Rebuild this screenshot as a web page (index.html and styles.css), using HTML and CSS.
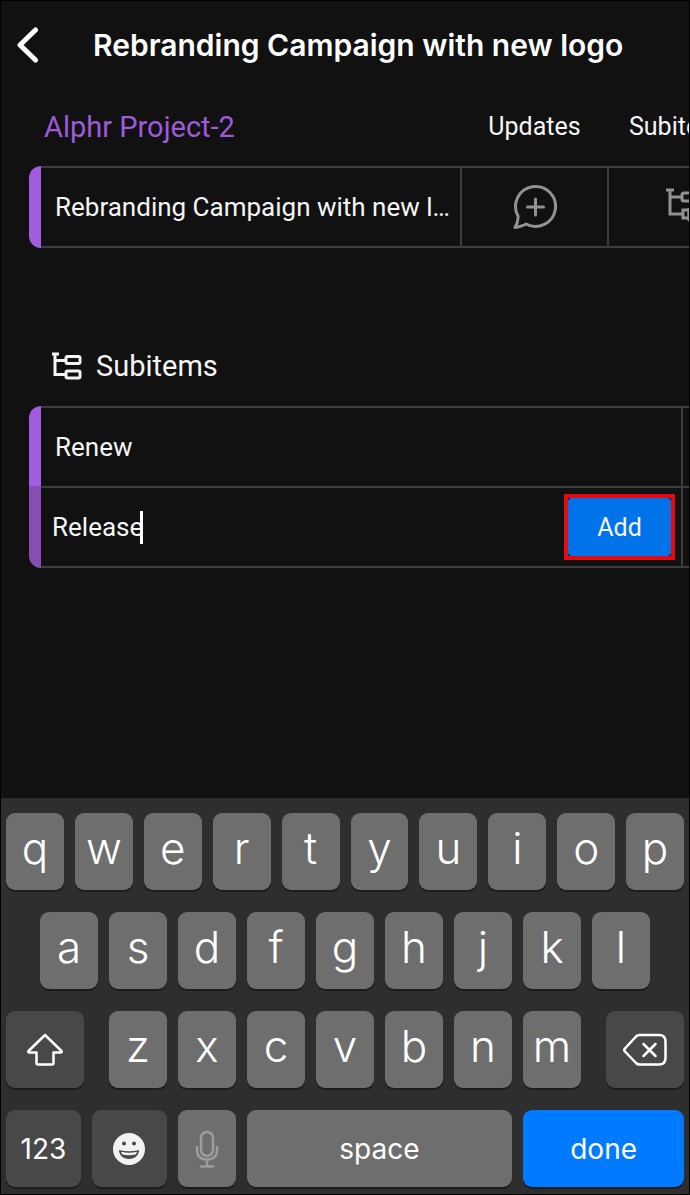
FILE: index.html
```
<!DOCTYPE html>
<html lang="en">
<head>
    <meta charset="UTF-8">
    <meta name="viewport" content="width=device-width, initial-scale=1.0">
    <title>Rebranding Campaign with new logo</title>
    <link rel="stylesheet" href="styles.css">
</head>
<body>
    <header class="top-bar">
        <button type="button" class="back" aria-label="Back">
            <svg width="22" height="36" viewBox="0 0 22 36"><path d="M18.500 3L3 18l15.500 15" fill="none" stroke="#fff" stroke-width="5" stroke-linecap="round" stroke-linejoin="round"/></svg>
        </button>
        <h1>Rebranding Campaign with new logo</h1>
    </header>

    <main>
        <table class="board item">
            <colgroup>
                <col class="stripe-col">
                <col>
                <col class="action-col">
                <col class="action-col">
            </colgroup>
            <thead>
                <tr>
                    <th colspan="2" class="project">Alphr Project-2</th>
                    <th>Updates</th>
                    <th>Subitems</th>
                </tr>
            </thead>
            <tbody>
                <tr>
                    <td class="stripe"></td>
                    <td class="name">Rebranding Campaign with new logo</td>
                    <td class="action">
                        <button type="button" aria-label="Add update">
                            <svg width="46" height="46" viewBox="0 0 46 46" fill="none" stroke="currentColor" stroke-width="3" stroke-linecap="round" stroke-linejoin="round"><path d="M6 32A20 20 0 1 1 14 40Q11 42 3 43.500Q6.500 37.500 6 32Z"/><path d="M23.500 15v16M15.500 23h16"/></svg>
                        </button>
                    </td>
                    <td class="action">
                        <button type="button" aria-label="Open subitems">
                            <svg width="34" height="38" viewBox="0 0 34 38" fill="none" stroke="currentColor" stroke-width="3"><path d="M0 2h8M4 2v24h12M4 9h12"/><rect x="16" y="5" width="15" height="8" rx="2"/><path d="M17 22h6v8h-6z"/><path d="M23 20v12l7 5"/></svg>
                        </button>
                    </td>
                </tr>
            </tbody>
        </table>

        <h2>
            <svg width="30" height="28" viewBox="0 0 30 28" fill="none" stroke="currentColor" stroke-width="3"><path d="M0 2h7M3 2v20.500h10M3 8.500h10"/><rect x="14" y="4.500" width="14" height="7" rx="1.500"/><rect x="14" y="19" width="14" height="7" rx="1.500"/></svg>
            Subitems
        </h2>

        <table class="board subitems">
            <colgroup>
                <col class="stripe-col">
                <col class="name-col">
                <col>
            </colgroup>
            <tbody>
                <tr>
                    <td class="stripe"></td>
                    <td class="name">Renew</td>
                    <td></td>
                </tr>
                <tr>
                    <td class="stripe dim"></td>
                    <td class="edit">
                        <form class="new-item">
                            <input type="text" value="Release" aria-label="Subitem name">
                            <span class="caret"></span>
                            <span class="highlight"><button type="button">Add</button></span>
                        </form>
                    </td>
                    <td></td>
                </tr>
            </tbody>
        </table>
    </main>

    <section class="keyboard" aria-label="Keyboard">
        <div class="keys">
            <button type="button">q</button>
            <button type="button">w</button>
            <button type="button">e</button>
            <button type="button">r</button>
            <button type="button">t</button>
            <button type="button">y</button>
            <button type="button">u</button>
            <button type="button">i</button>
            <button type="button">o</button>
            <button type="button">p</button>
        </div>
        <div class="keys middle">
            <button type="button">a</button>
            <button type="button">s</button>
            <button type="button">d</button>
            <button type="button">f</button>
            <button type="button">g</button>
            <button type="button">h</button>
            <button type="button">j</button>
            <button type="button">k</button>
            <button type="button">l</button>
        </div>
        <div class="keys">
            <button type="button" class="dark shift" aria-label="Shift">
                <svg width="38" height="34" viewBox="0 0 38 34"><path d="M19 2L2.500 18q-1 1.500 1 1.500h7V30q0 1.500 1.500 1.500h14q1.500 0 1.500-1.500V19.500h7q2 0 1-1.500Z" fill="none" stroke="#fff" stroke-width="2.500" stroke-linejoin="round"/></svg>
            </button>
            <button type="button">z</button>
            <button type="button">x</button>
            <button type="button">c</button>
            <button type="button">v</button>
            <button type="button">b</button>
            <button type="button">n</button>
            <button type="button">m</button>
            <button type="button" class="dark delete" aria-label="Delete">
                <svg width="44" height="34" viewBox="0 0 44 34" fill="none" stroke="#fff" stroke-width="2.500" stroke-linecap="round" stroke-linejoin="round"><path d="M16.500 2H36q6.500 0 6.500 6.500v16.500q0 6.500-6.500 6.500H16.500q-2 0-3.500-1.500L2 18.500q-1.500-1.500 0-3L13 3.500Q14.500 2 16.500 2Z"/><path d="M20.500 11l12 12M32.500 11l-12 12"/></svg>
            </button>
        </div>
        <div class="keys">
            <button type="button" class="dark word side">123</button>
            <button type="button" class="dark word side" aria-label="Emoji">
                <svg width="32" height="32" viewBox="0 0 32 32"><circle cx="16" cy="16" r="16" fill="#f2f2f2"/><circle cx="11" cy="10.500" r="2" fill="#484848"/><circle cx="21" cy="10.500" r="2" fill="#484848"/><path d="M6 17q10 2.500 20 0c0 5-4 9-10 9s-10-4-10-9Z" fill="#484848"/><path d="M8 18.800q8 1.700 16 0-.300 1.700-1.500 2.700-6.500 1.400-13 0-1.200-1-1.500-2.700Z" fill="#f2f2f2"/></svg>
            </button>
            <button type="button" class="word mic" aria-label="Dictate">
                <svg width="24" height="38" viewBox="0 0 24 38" fill="none" stroke="#9c9c9c" stroke-width="2.500" stroke-linecap="round"><rect x="6" y="2" width="12" height="24" rx="6"/><path d="M2 17v3q0 9.500 10 9.500T22 20v-3M12 30v6M6 36.500h12"/></svg>
            </button>
            <button type="button" class="word space">space</button>
            <button type="button" class="word done">done</button>
        </div>
    </section>
</body>
</html>
```
FILE: styles.css
```
* {
    box-sizing: border-box;
}
body {
    display: flex;
    flex-direction: column;
    min-height: 100vh;
    margin: 0;
    border: 1px solid #000;
    overflow-x: hidden;
    background-color: #111;
    color: #f5f5f5;
    font-family: Roboto, sans-serif;
    font-size: 25px;
}
button {
    padding: 0;
    border: none;
    color: inherit;
    font: inherit;
    cursor: pointer;
}
svg {
    display: block;
}

/* Header */
.top-bar {
    display: flex;
    align-items: center;
    gap: 54px;
    height: 88px;
    padding-left: 16px;
}
.back {
    background: none;
}
h1 {
    margin: 0;
    color: #fff;
    font-family: Inter, sans-serif;
    font-size: 30px;
    font-weight: 600;
    white-space: nowrap;
}

/* Boards */
main {
    padding-left: 28px;
    overflow: hidden;
}
.board {
    table-layout: fixed;
    border-collapse: separate;
    border-spacing: 0;
}
.item {
    width: 727px;
}
.subitems {
    width: 100%;
}
.stripe-col {
    width: 12px;
}
.action-col {
    width: 147px;
}
.name-col {
    width: 642px;
}
th {
    height: 77px;
    padding: 0 2px 2px 0;
    font-weight: 400;
    white-space: nowrap;
}
.project {
    padding-left: 15px;
    color: #9d5bd8;
    font-size: 29px;
    text-align: left;
}
td {
    height: 80px;
    padding: 0;
    border-top: 2px solid #3d3d3d;
    border-right: 2px solid #3d3d3d;
}
tr:last-child td {
    height: 82px;
    border-bottom: 2px solid #3d3d3d;
}
.board td:last-child {
    border-right: none;
}
.board .stripe {
    border: none;
    background-color: #a25ddc;
}
.board .dim {
    background-color: #864db5;
}
.board tr:first-child .stripe {
    border-top-left-radius: 12px;
}
.board tr:last-child .stripe {
    border-bottom-left-radius: 12px;
}
.name {
    padding: 0 8px 0 14px;
    overflow: hidden;
    font-size: 26px;
    text-overflow: ellipsis;
    white-space: nowrap;
}
.action button {
    display: block;
    margin: 0 auto;
    background: none;
    color: #929292;
}
h2 {
    display: flex;
    align-items: center;
    gap: 14px;
    height: 80px;
    margin: 78px 0 0 23px;
    font-size: 29px;
    font-weight: 400;
}
.new-item {
    display: flex;
    align-items: center;
    margin: 0;
    padding: 0 6px 0 11px;
}
.new-item input {
    width: 92px;
    padding: 0;
    border: none;
    outline: none;
    background: none;
    color: inherit;
    font: inherit;
    font-size: 26px;
}
.caret {
    width: 3px;
    height: 33px;
    margin-left: -4px;
    background-color: #fff;
}
.highlight {
    margin-left: auto;
    border: 4px solid #e30b0f;
}
.highlight button {
    display: block;
    width: 103px;
    height: 58px;
    border-radius: 4px;
    background-color: #0073ea;
}

/* Keyboard */
.keyboard {
    display: flex;
    flex-direction: column;
    gap: 22px;
    margin-top: auto;
    padding: 15px 5px 7px;
    background-color: #2e2e2e;
    color: #fff;
    font-family: Inter, sans-serif;
}
.keys {
    display: flex;
    gap: 11px;
}
.keys button {
    display: flex;
    flex: 58 1 0;
    align-items: center;
    justify-content: center;
    height: 77px;
    padding-bottom: 8px;
    border-radius: 9px;
    background-color: #6e6e6e;
    box-shadow: 0 2px 0 #1d1d1d;
    font-size: 44px;
    font-weight: 300;
}
.middle {
    padding: 0 34px;
}
.keys .dark {
    padding-bottom: 0;
    background-color: #484848;
}
.keys .shift {
    flex-grow: 78;
    margin-right: 14px;
}
.keys .delete {
    flex-grow: 78;
    margin-left: 14px;
}
.keys .word {
    padding-bottom: 0;
    font-size: 28px;
    font-weight: 400;
}
.keys .side {
    flex-grow: 75;
}
.keys .space {
    flex-grow: 266;
}
.keys .done {
    flex-grow: 161;
    background-color: #007aff;
}
```
